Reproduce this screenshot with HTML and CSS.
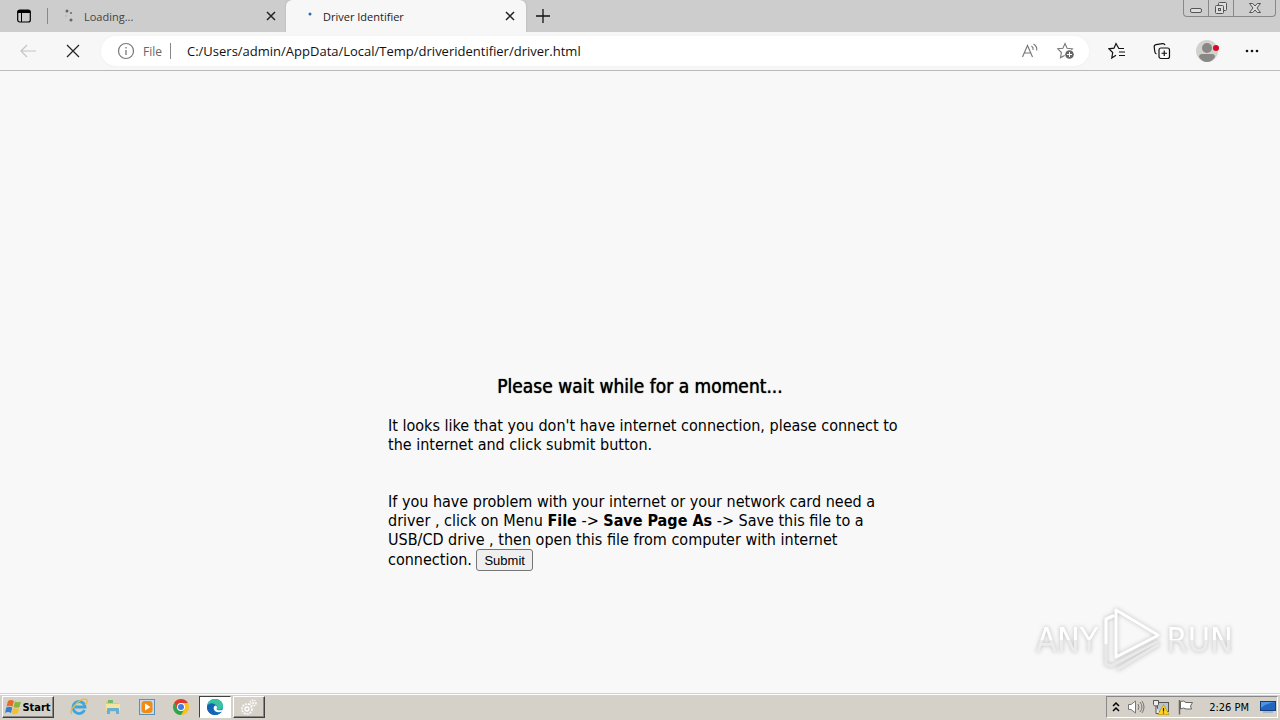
FILE: index.html
```html
<!DOCTYPE html>
<html lang="en">
<head>
    <meta charset="UTF-8">
    <title>Driver Identifier</title>
    <link rel="stylesheet" href="styles.css">
</head>
<body>
    <header class="tab-strip">
        <button class="icon-btn tab-menu" aria-label="Tab actions">
            <svg width="16" height="16" viewBox="0 0 16 16"><rect x="1.7" y="2" width="12.6" height="12" rx="2" fill="none" stroke="#000" stroke-width="1.2"/><path d="M1.5 5V4a2 2 0 0 1 2-2h9a2 2 0 0 1 2 2v1z"/><path d="M5.5 5v9" stroke="#000"/></svg>
        </button>
        <span class="divider"></span>
        <div class="tab">
            <svg class="tab-icon" width="16" height="16" viewBox="0 0 16 16" fill="#666"><circle cx="4" cy="3" r="1.5"/><circle cx="8" cy="5" r="1"/><circle cx="3" cy="8" r=".8" fill="#aaa"/><circle cx="8" cy="12" r="1.5"/></svg>
            <span class="tab-title">Loading...</span>
            <button class="icon-btn" aria-label="Close Loading tab">
                <svg width="10" height="10" viewBox="0 0 10 10"><path d="M1 1l8 8M9 1l-8 8" stroke="#222" stroke-width="1.5"/></svg>
            </button>
        </div>
        <div class="tab active">
            <svg class="tab-icon" width="16" height="16" viewBox="0 0 16 16"><circle cx="8" cy="6" r="1.5" fill="#2d6da8"/></svg>
            <span class="tab-title">Driver Identifier</span>
            <button class="icon-btn" aria-label="Close Driver Identifier tab">
                <svg width="10" height="10" viewBox="0 0 10 10"><path d="M1 1l8 8M9 1l-8 8" stroke="#222" stroke-width="1.5"/></svg>
            </button>
        </div>
        <button class="icon-btn new-tab" aria-label="New tab">
            <svg width="14" height="14" viewBox="0 0 14 14"><path d="M7 0v14M0 7h14" stroke="#111" stroke-width="1.3"/></svg>
        </button>
        <div class="window-buttons">
            <button aria-label="Minimize"><svg width="14" height="12" viewBox="0 0 14 12"><rect x="1.5" y="6.5" width="11" height="4" rx="1.5" fill="#ddd" stroke="#555"/></svg></button>
            <button aria-label="Restore"><svg width="14" height="14" viewBox="0 0 14 14" fill="#ddd" stroke="#555"><rect x="4.5" y="1.5" width="8" height="8" rx="1"/><rect x="1.5" y="4.5" width="8" height="8" rx="1"/><rect x="4.5" y="7.5" width="2" height="2"/></svg></button>
            <button class="wide" aria-label="Close"><svg width="14" height="12" viewBox="0 0 14 12"><path d="M1.500 1.500h3.200L7 4l2.300-2.500h3.200L9 6l3.500 4.500H9.300L7 8l-2.300 2.500H1.500L5 6z" fill="#ddd" stroke="#555"/></svg></button>
        </div>
    </header>

    <nav class="toolbar">
        <button class="icon-btn" aria-label="Back" disabled>
            <svg width="18" height="16" viewBox="0 0 18 16"><path d="M17 8H2M8 2L2 8l6 6" fill="none" stroke="#c4c4c4" stroke-width="1.2"/></svg>
        </button>
        <button class="icon-btn" aria-label="Stop">
            <svg width="14" height="14" viewBox="0 0 14 14"><path d="M1 1l12 12M13 1L1 13" stroke="#222" stroke-width="1.2"/></svg>
        </button>
        <div class="address-bar">
            <svg width="18" height="18" viewBox="0 0 18 18"><circle cx="9" cy="9" r="7.5" fill="none" stroke="#777" stroke-width="1.2"/><path d="M9 8v5M9 5v1.500" stroke="#777" stroke-width="1.3"/></svg>
            <label for="address">File</label>
            <span class="divider"></span>
            <input id="address" type="text" value="C:/Users/admin/AppData/Local/Temp/driveridentifier/driver.html">
            <button class="icon-btn" aria-label="Read aloud">
                <svg width="18" height="16" viewBox="0 0 18 16" fill="none" stroke="#777" stroke-width="1.1"><path d="M1.500 14L6.500 2.500 11.500 14M3.200 10h6.600M10.500 3q2 1.500 1.600 4M12.500 1q4 2.500 3.200 6.500"/></svg>
            </button>
            <button class="icon-btn" aria-label="Add to favorites">
                <svg width="18" height="18" viewBox="0 0 18 18"><path d="M8 1.500l2.100 4.700 5.300.6-4 3.600 1 5.300L8 13.200l-4.500 2.500.9-5.200L.8 6.800l5.100-.6z" fill="none" stroke="#777" stroke-width="1.1"/><circle cx="12.500" cy="12.500" r="5" fill="#fff"/><circle cx="12.500" cy="12.500" r="4.300" fill="#666"/><path d="M12.500 10v5M10 12.500h5" stroke="#fff"/></svg>
            </button>
        </div>
        <button class="icon-btn" aria-label="Favorites">
            <svg width="18" height="18" viewBox="0 0 18 18" fill="none" stroke="#111" stroke-width="1.2"><path d="M16 6.500h-5.200L8 1.500 6 6.200l-5 .6 3.700 3.700L3.800 16 8 13.300M11 10h6M11 13.500h6"/></svg>
        </button>
        <button class="icon-btn" aria-label="Collections">
            <svg width="18" height="18" viewBox="0 0 18 18" fill="none" stroke="#111" stroke-width="1.2"><path d="M3.500 12Q2 11.500 1.800 9.500L1.200 5q-.2-2 1.800-2.400L9.500 1.600q2-.2 2.500 1.600"/><rect x="6" y="6" width="10.500" height="10.500" rx="2"/><path d="M11.250 8.500v5.500M8.500 11.250H14"/></svg>
        </button>
        <button class="icon-btn" aria-label="Profile">
            <svg width="24" height="24" viewBox="0 0 24 24"><circle cx="12" cy="12" r="11" fill="#d2d1ce"/><circle cx="12" cy="9" r="5" fill="#8a8886"/><path d="M4 18q0-3 3-3h10q3 0 3 3-3 5-8 5t-8-5z" fill="#8a8886"/><circle cx="21" cy="9" r="3" fill="#d50b20"/></svg>
        </button>
        <button class="icon-btn" aria-label="Settings and more">
            <svg width="16" height="16" viewBox="0 0 16 16" fill="#111"><circle cx="3" cy="8" r="1.3"/><circle cx="8" cy="8" r="1.3"/><circle cx="13" cy="8" r="1.3"/></svg>
        </button>
    </nav>

    <main class="page">
        <div class="message">
            <h1>Please wait while for a moment...</h1>
            <p>It looks like that you don't have internet connection, please connect to<br>the internet and click submit button.</p>
            <p class="help">If you have problem with your internet or your network card need a<br>driver , click on Menu <b>File</b> -&gt; <b>Save Page As</b> -&gt; Save this file to a<br>USB/CD drive , then open this file from computer with internet<br>connection. <button class="submit">Submit</button></p>
        </div>
        <div class="watermark">
            <span>ANY</span>
            <svg width="62" height="68" viewBox="0 0 62 68" fill="none" stroke-linejoin="round" stroke-linecap="round"><path d="M12 10L5 13v45l5 2 46-24M17 63l40-24" stroke="#e9e9e9" stroke-width="3"/><path d="M12 10L5 13v24M57 29L15 4v47l41-21" stroke="#fff" stroke-width="3"/></svg>
            <span>RUN</span>
        </div>
    </main>

    <footer class="taskbar">
        <button class="task start">
            <svg width="17" height="16" viewBox="0 0 17 16"><path d="M3 2q3-2 6 0L7.500 7.500q-3-1.500-6 0z" fill="#e96b25"/><path d="M10 2.500q3 1.500 6 0L14.500 8q-3 1.500-6 0z" fill="#83b83c"/><path d="M1.300 8.500q3-1.500 6 0L6 14q-3-2-6 0z" fill="#377dcc"/><path d="M8.200 9q3 1.500 6 0l-1.400 5.500q-3 1.500-6 0z" fill="#f5c02a"/></svg>
            Start
        </button>
        <button class="task" aria-label="Internet Explorer">
            <svg width="18" height="18" viewBox="0 0 18 18" fill="none"><path d="M14.500 12A6 6 0 1 1 15 9H5" stroke="#3ca6e0" stroke-width="2.8"/><path d="M2 16Q-1 13 6 6T17 2q1 2-2 5" stroke="#e8b83c" stroke-width="1.3"/></svg>
        </button>
        <button class="task" aria-label="Windows Explorer">
            <svg width="18" height="18" viewBox="0 0 18 18"><path d="M2 3h5l1 2h7v9H2z" fill="#e9c861"/><path d="M4 2h5v3H4z" fill="#73b96b"/><path d="M2 6h14v7H2z" fill="#f6e3a0"/><path d="M3 16v-5q0-1 1-1h10q1 0 1 1v5h-3v-3H6v3z" fill="#67afd3"/></svg>
        </button>
        <button class="task" aria-label="Media Player">
            <svg width="18" height="18" viewBox="0 0 18 18"><rect x="1.500" y="1.500" width="15" height="15" fill="#c2ddf0" stroke="#5c91b7"/><rect x="3.500" y="3" width="11" height="12" rx="3" fill="#f58a13"/><path d="M7 5.500v7L12.500 9z" fill="#fff"/></svg>
        </button>
        <button class="task" aria-label="Chrome">
            <svg width="18" height="18" viewBox="0 0 18 18"><circle cx="9" cy="9" r="8" fill="#fbc116"/><path d="M2.100 5a8 8 0 0 1 13.800 0H9L5.500 11z" fill="#dc3b2e"/><path d="M2.100 5a8 8 0 0 0 6.900 12l3.500-6H5.500z" fill="#31a350"/><circle cx="9" cy="9" r="4" fill="#fff"/><circle cx="9" cy="9" r="3" fill="#3f7de0"/></svg>
        </button>
        <button class="task pressed" aria-label="Edge">
            <svg width="18" height="18" viewBox="0 0 18 18"><circle cx="9" cy="9" r="8" fill="#1676c8"/><path d="M1.200 8C2 3 5 1 9 1c5 0 8 3 8 7 0 3-3 4.500-6.500 3.200 1.500-2 .5-4.700-2-4.700C5 6.500 2.500 6.500 1.200 8z" fill="#39c3a0"/><path d="M1 9c.5-4 7-5 8.500-1.500C6 8 6 13 10 14.500c2 .8 4 .3 6-1C12 19 1 18 1 9z" fill="#1464b3"/><path d="M10.500 11.200c1.500 1.500 4 1.500 6.200.3l-.8 2c-3.500 1.500-7 .5-8-2.300-.6-2 .4-3.500 1.600-3.700 1.500.5 2 2 1 3.700z" fill="#fff"/></svg>
        </button>
        <button class="task raised" aria-label="Services">
            <svg width="18" height="18" viewBox="0 0 18 18" fill="none" stroke="#fff"><circle cx="7" cy="11" r="5" stroke-width="1.5" stroke-dasharray="2 1"/><circle cx="7" cy="11" r="2" stroke-width="1.3"/><circle cx="13" cy="5" r="3" stroke-width="1.3" stroke-dasharray="1.5 1"/><circle cx="13" cy="5" r="1"/></svg>
        </button>
        <div class="tray">
            <svg width="8" height="12" viewBox="0 0 8 12"><path d="M1 5l3-3 3 3M1 10l3-3 3 3" fill="none" stroke="#000" stroke-width="1.5"/></svg>
            <svg width="18" height="16" viewBox="0 0 18 16" fill="none" stroke="#777"><path d="M1.500 5.500H4L8.500 2v12L4 10.500H1.500z" fill="#fff"/><path d="M11 5q2 3 0 6M13 3q4 5 0 10M15 2q4 6 0 12"/></svg>
            <svg width="18" height="16" viewBox="0 0 18 16"><rect x="5.500" y="3.500" width="11" height="9" fill="#b9c6ce" stroke="#555"/><path d="M1.500 1.500v4q0 1.500 2.500 1.500t2.500-1.500v-4zM4 7v7.500h4" fill="#eee" stroke="#555"/><path d="M11.500 5.500l5.500 10H6z" fill="#ffd51c" stroke="#b58a00" stroke-width=".6"/><path d="M11.500 9v3.500M11.500 13.500v1" stroke="#222" stroke-width="1.2"/></svg>
            <svg width="18" height="16" viewBox="0 0 18 16"><path d="M3.500 2.500q3-1.500 5.500 1h6.500l-2 3.500 1 3H9q-2.500-2-5.500 0z" fill="#fff" stroke="#666"/><path d="M2.500 1v14.500" stroke="#666" stroke-width="1.5"/></svg>
            <time>2:26 PM</time>
            <svg width="16" height="14" viewBox="0 0 16 14"><rect x=".5" y="1.500" width="15" height="9" fill="#2265bf" stroke="#163c7a"/><path d="M1 8Q7 3 15 2H1z" fill="#4d94e5"/><path d="M3 12h10" stroke="#a5b7cd" stroke-width="2"/></svg>
        </div>
    </footer>
</body>
</html>
```
FILE: styles.css
```css
* {
    box-sizing: border-box;
}

body {
    display: flex;
    flex-direction: column;
    min-height: 100vh;
    margin: 0;
    background: #f8f8f8;
    color: #000;
    font-family: "DejaVu Sans Condensed", "DejaVu Sans", sans-serif;
}

button {
    padding: 0;
    font-family: inherit;
}

svg {
    display: block;
    flex: none;
}

.icon-btn {
    display: flex;
    align-items: center;
    justify-content: center;
    flex: none;
    min-width: 16px;
    border: none;
    background: none;
}

.divider {
    flex: none;
    width: 1px;
    height: 16px;
    background: #888;
}

/* Tabs */
.tab-strip {
    display: flex;
    align-items: center;
    height: 32px;
    background: #cdcdcd;
    font-family: "Open Sans", "Noto Sans", sans-serif;
    font-size: 11px;
}

.tab-menu {
    width: 47px;
}

.tab {
    display: flex;
    align-items: center;
    width: 238px;
    height: 32px;
    padding: 0 7px 0 15px;
    color: #444;
}

.tab.active {
    width: 240px;
    padding: 0 8px 0 16px;
    border-radius: 6px 6px 0 0;
    background: #f7f7f7;
    box-shadow: 0 0 2px #aaa;
    color: #222;
}

.tab-title {
    flex: 1;
    margin-left: 5px;
}

.new-tab {
    width: 34px;
}

.window-buttons {
    display: flex;
    align-self: flex-start;
    height: 17px;
    margin: 0 4px 0 auto;
    border: 1px solid #888;
    border-top: none;
    border-radius: 0 0 4px 4px;
}

.window-buttons button {
    display: flex;
    align-items: center;
    justify-content: center;
    width: 25px;
    border: none;
    border-right: 1px solid #888;
    background: none;
}

.window-buttons .wide {
    width: 41px;
    border-right: none;
}

/* Address row */
.toolbar {
    display: flex;
    align-items: center;
    height: 39px;
    padding: 0 18px;
    gap: 25px;
    border-bottom: 1px solid #bbb;
    background: #f7f7f7;
    font-family: "Open Sans", "Noto Sans", sans-serif;
}

.toolbar > .icon-btn {
    width: 20px;
}

.address-bar {
    display: flex;
    align-items: center;
    flex: 1;
    height: 30px;
    margin: 0 -7px;
    padding: 0 9px 0 16px;
    gap: 8px;
    border-radius: 15px;
    background: #fff;
    box-shadow: 0 0 3px #eee;
    font-size: 12px;
}

.address-bar label {
    color: #666;
}

.address-bar input {
    flex: 1;
    min-width: 0;
    padding: 0 8px;
    border: none;
    outline: none;
    background: none;
    color: #111;
    font-family: inherit;
    font-size: 13px;
}

.address-bar .icon-btn {
    width: 28px;
}

/* Page */
.page {
    position: relative;
    flex: 1;
    padding: 303px 16px 16px;
}

.message {
    max-width: 504px;
    margin: 0 auto;
    font-size: 16px;
    line-height: 19px;
}

.message h1 {
    margin: 0 0 18px;
    font-size: 19px;
    font-weight: normal;
    line-height: 24px;
    text-align: center;
    text-shadow: 0 0 1px #000;
}

.message p {
    margin: 0;
    white-space: nowrap;
}

.message .help {
    margin-top: 38px;
}

.submit {
    height: 22px;
    padding: 0 7px;
    border: 1px solid #767676;
    border-radius: 3px;
    background: #efefef;
    font-family: "Liberation Sans", Arial, sans-serif;
    font-size: 13px;
}

.watermark {
    position: absolute;
    right: 47px;
    bottom: 19px;
    display: flex;
    align-items: center;
    gap: 3px;
    font-size: 34px;
    filter: drop-shadow(0 0 2px #bbb);
}

.watermark span {
    background: linear-gradient(#fff 50%, #ececec 50%);
    -webkit-background-clip: text;
    -webkit-text-fill-color: transparent;
}

/* Taskbar */
.taskbar {
    display: flex;
    align-items: center;
    height: 27px;
    padding: 2px;
    border-top: 1px solid #d5d1c9;
    background: #d5d1c9;
    box-shadow: inset 0 1px #fff;
    font-size: 11px;
}

.task {
    display: flex;
    align-items: center;
    justify-content: center;
    width: 34px;
    height: 22px;
    border: none;
    background: none;
}

.start,
.raised {
    border: 1px solid;
    border-color: #fff #404040 #404040 #fff;
    box-shadow: inset -1px -1px #888;
}

.start {
    width: 52px;
    margin-right: 8px;
    font-size: 11px;
    font-weight: bold;
}

.raised {
    width: 32px;
}

.pressed {
    width: 32px;
    margin: 0 2px 0 1px;
    border: 1px solid;
    border-color: #404040 #fff #fff #404040;
    background: #fff;
}

.tray {
    display: flex;
    align-items: center;
    height: 22px;
    margin-left: auto;
    padding: 0 1px 0 5px;
    gap: 7px;
    border: 1px solid;
    border-color: #888 #fff #fff #888;
}

.tray time {
    margin: 0 4px 0 7px;
}
```
